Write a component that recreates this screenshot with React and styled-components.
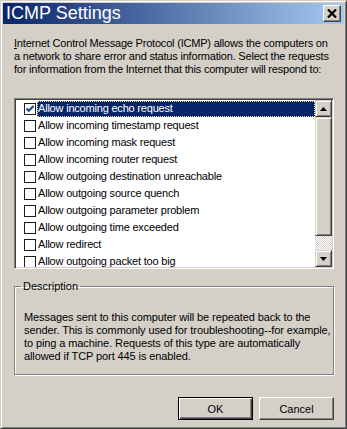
import React from 'react';
import styled, { createGlobalStyle } from 'styled-components';

const GlobalStyle = createGlobalStyle`
  html, body {
    margin: 0;
    padding: 0;
    background: #D4D0C8;
  }
  body {
    font-family: "Liberation Sans", Arial, sans-serif;
    font-size: 11px;
  }
`;

const rules = [
    {label: 'Allow incoming echo request', checked: true},
    {label: 'Allow incoming timestamp request'},
    {label: 'Allow incoming mask request'},
    {label: 'Allow incoming router request'},
    {label: 'Allow outgoing destination unreachable'},
    {label: 'Allow outgoing source quench'},
    {label: 'Allow outgoing parameter problem'},
    {label: 'Allow outgoing time exceeded'},
    {label: 'Allow redirect'},
    {label: 'Allow outgoing packet too big'},
];

const CheckMark = () => (
    <svg width="10" height="10" viewBox="0 0 10 10">
        <path d="M1.5 4.5 L3.8 6.8 L8.5 2" fill="none" stroke="#1F4D86" strokeWidth="2.2"/>
    </svg>
);

const Arrow = ({down}) => (
    <svg width="7" height="4" viewBox="0 0 7 4">
        <polygon points={down ? '0,0 7,0 3.5,4' : '0,4 7,4 3.5,0'} fill="#000"/>
    </svg>
);

export default () => {

    return (
        <>
            <GlobalStyle/>
            <Window>
                <TitleBar>
                    <Title>ICMP Settings</Title>
                    <CloseButton>
                        <svg width="10" height="9" viewBox="0 0 10 9">
                            <path d="M1 0.5 L9 8.5 M9 0.5 L1 8.5" stroke="#000" strokeWidth="2.2"/>
                        </svg>
                    </CloseButton>
                </TitleBar>
                <Body>
                    <Intro>
                        <u>I</u>nternet Control Message Protocol (ICMP) allows the computers on<br/>
                        a network to share error and status information. Select the requests<br/>
                        for information from the Internet that this computer will respond to:
                    </Intro>
                    <ListBox>
                        <Rows>
                            {rules.map((r) => (
                                <Row key={r.label}>
                                    <Check>{r.checked && <CheckMark/>}</Check>
                                    <RowLabel $selected={r.checked}>{r.label}</RowLabel>
                                </Row>
                            ))}
                        </Rows>
                        <ScrollBar>
                            <ScrollButton><Arrow/></ScrollButton>
                            <Thumb/>
                            <Track/>
                            <ScrollButton><Arrow down/></ScrollButton>
                        </ScrollBar>
                    </ListBox>
                    <Group>
                        <Legend>Description</Legend>
                        <Description>
                            Messages sent to this computer will be repeated back to the<br/>
                            sender. This is commonly used for troubleshooting--for example,<br/>
                            to ping a machine. Requests of this type are automatically<br/>
                            allowed if TCP port 445 is enabled.
                        </Description>
                    </Group>
                    <Buttons>
                        <Button $default>OK</Button>
                        <Button>Cancel</Button>
                    </Buttons>
                </Body>
            </Window>
        </>
    )
};

const Window = styled.div`
  width: 347px;
  height: 429px;
  box-sizing: border-box;
  background: #D4D0C8;
  border: 1px solid;
  border-color: #D4D0C8 #404040 #404040 #D4D0C8;
  box-shadow: inset 1px 1px 0 #fff, inset -1px -1px 0 #808080;
  padding: 2px;
  display: flex;
  flex-direction: column;
`;

const TitleBar = styled.div`
  height: 21px;
  display: flex;
  align-items: center;
  justify-content: space-between;
  padding: 0 3px 0 3px;
  background: linear-gradient(to right, #0A246A, #A6CAF0);
`;

const Title = styled.div`
  color: #fff;
  font-size: 18px;
  line-height: 21px;
  white-space: nowrap;
`;

const CloseButton = styled.div`
  width: 18px;
  height: 17px;
  box-sizing: border-box;
  background: #D4D0C8;
  border: 1px solid;
  border-color: #fff #404040 #404040 #fff;
  box-shadow: inset -1px -1px 0 #808080;
  display: flex;
  align-items: center;
  justify-content: center;
  padding: 0 1px 1px 0;
`;

const Body = styled.div`
  flex: 1;
  display: flex;
  flex-direction: column;
  padding: 13px 10px 6px 11px;
  color: #000;
`;

const Intro = styled.div`
  line-height: 13px;
  white-space: nowrap;
  letter-spacing: -0.2px;
`;

const ListBox = styled.div`
  margin-top: 22px;
  height: 171px;
  box-sizing: border-box;
  border: 1px solid;
  border-color: #808080 #fff #fff #808080;
  box-shadow: inset 1px 1px 0 #404040, inset -1px -1px 0 #D4D0C8;
  padding: 1px;
  display: flex;
  overflow: hidden;
`;

const Rows = styled.div`
  flex: 1;
  background: #fff;
  overflow: hidden;
`;

const Row = styled.div`
  height: 17px;
  display: flex;
  align-items: center;
  padding-left: 8px;
`;

const Check = styled.span`
  width: 12px;
  height: 12px;
  box-sizing: border-box;
  border: 1px solid #1C1C1C;
  background: #fff;
  display: flex;
  align-items: center;
  justify-content: center;
  flex-shrink: 0;
`;

const RowLabel = styled.span`
  flex: ${p => p.$selected ? 1 : 'none'};
  margin-left: 1px;
  height: 16px;
  line-height: 14px;
  padding: 0 0 2px 1px;
  box-sizing: border-box;
  white-space: nowrap;
  letter-spacing: -0.2px;
  background: ${p => p.$selected ? '#0A246A' : 'transparent'};
  color: ${p => p.$selected ? '#fff' : '#000'};
  outline: ${p => p.$selected ? '1px dotted #F0E6A0' : 'none'};
  outline-offset: -1px;
`;

const ScrollBar = styled.div`
  width: 17px;
  display: flex;
  flex-direction: column;
`;

const raised = `
  box-sizing: border-box;
  background: #D4D0C8;
  border: 1px solid;
  border-color: #D4D0C8 #404040 #404040 #D4D0C8;
  box-shadow: inset 1px 1px 0 #fff, inset -1px -1px 0 #808080;
`;

const ScrollButton = styled.div`
  ${raised}
  height: 17px;
  display: flex;
  align-items: center;
  justify-content: center;
`;

const Thumb = styled.div`
  ${raised}
  height: 119px;
`;

const Track = styled.div`
  flex: 1;
  background-color: #fff;
  background-image: conic-gradient(#D4D0C8 25%, #fff 0 50%, #D4D0C8 0 75%, #fff 0);
  background-size: 2px 2px;
`;

const Group = styled.fieldset`
  margin: 11px 0 0 0;
  padding: 18px 9px 11px 9px;
  border: 1px solid #808080;
  box-shadow: 1px 1px 0 #fff, inset 1px 1px 0 #fff;
  min-width: 0;
`;

const Legend = styled.legend`
  margin-left: -3px;
  padding: 0 2px;
  line-height: 13px;
`;

const Description = styled.div`
  line-height: 13px;
  white-space: nowrap;
  letter-spacing: -0.1px;
`;

const Buttons = styled.div`
  margin-top: auto;
  display: flex;
  justify-content: flex-end;
  gap: 6px;
`;

const Button = styled.div`
  width: 75px;
  height: 23px;
  box-sizing: border-box;
  background: #D4D0C8;
  display: flex;
  align-items: center;
  justify-content: center;
  font-size: 11px;
  border: 1px solid;
  border-color: ${p => p.$default ? '#000' : '#fff #404040 #404040 #fff'};
  box-shadow: ${p => p.$default
    ? 'inset 1px 1px 0 #fff, inset -1px -1px 0 #404040, inset -2px -2px 0 #808080'
    : 'inset -1px -1px 0 #808080'};
`;
